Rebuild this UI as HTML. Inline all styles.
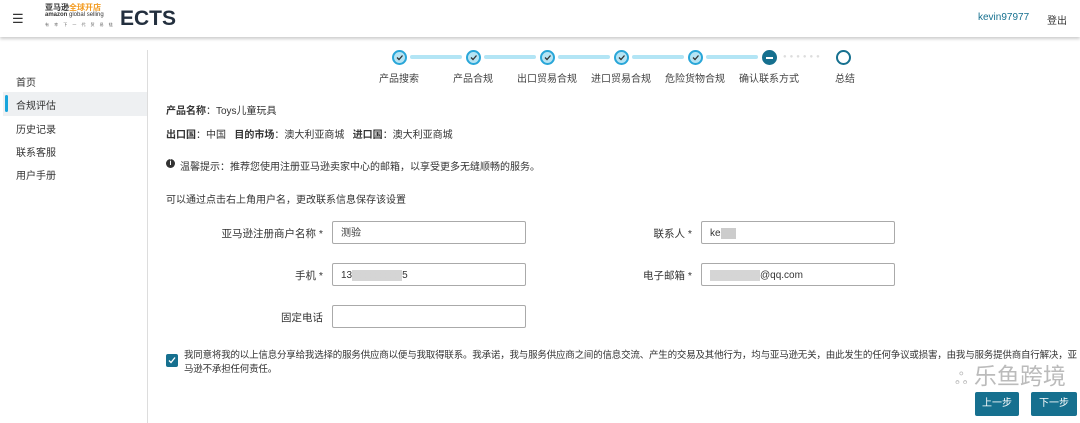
<!DOCTYPE html>
<html><head><meta charset="utf-8"><style>
*{margin:0;padding:0;box-sizing:border-box}
body{width:1080px;height:423px;overflow:hidden;background:#fff;font-family:"Liberation Sans","Noto Sans CJK SC",sans-serif;color:#333;font-size:10px;position:relative}
.a{position:absolute;white-space:nowrap}
.hdr{position:absolute;left:0;top:0;width:1080px;height:37px;background:#fff;box-shadow:0 2px 3px rgba(0,0,0,.2)}
.side div{position:absolute;left:16px;font-size:10px;color:#333}
.circ{position:absolute;width:15px;height:15px;border-radius:50%;border:2px solid #29a6d8;background:#b5e4f4;top:50px}
.circ svg{position:absolute;left:1px;top:1px}
.bar{position:absolute;top:55px;height:4px;background:#b3e5f5;border-radius:2px}
.lbl{position:absolute;top:70px;font-size:10px;color:#444;white-space:nowrap;transform:translateX(-50%)}
.inp{position:absolute;height:23px;border:1px solid #aaa;border-radius:2px;background:#fff;font-size:10px;padding:1px 8px 0;line-height:21px;color:#333}
.fl{position:absolute;font-size:10.5px;color:#333;text-align:right;white-space:nowrap}
.btn{position:absolute;top:392px;height:24px;background:#16708f;color:#fff;font-size:10px;text-align:center;line-height:24px;border-radius:2px}
b{font-weight:bold}
</style></head><body>
<div class="hdr">
<div class="a" style="left:12px;top:11px;font-size:13px;color:#333">☰</div>
<div class="a" style="left:45px;top:3px;font-size:8px;line-height:9px;font-weight:bold;color:#333">亚马逊<span style="color:#f39a1e">全球开店</span></div>
<div class="a" style="left:45px;top:12px;font-size:6px;line-height:7px;color:#333"><b>amazon</b> global selling</div>
<div class="a" style="left:45px;top:22px;font-size:4px;line-height:5px;color:#666;letter-spacing:2px">有 幸 下 一 代 贸 易 链</div>
<div class="a" style="left:120px;top:7px;font-size:21px;font-weight:bold;color:#232f3e">ECTS</div>
<div class="a" style="left:978px;top:12px;font-size:10px;color:#16708f">kevin97977</div>
<div class="a" style="left:1047px;top:12px;font-size:10px;color:#333">登出</div>
</div>
<div class="a" style="left:147px;top:50px;width:1px;height:373px;background:#ddd"></div>
<div class="a" style="left:3px;top:92px;width:144px;height:24px;background:#eef0f2"></div>
<div class="a" style="left:5px;top:95px;width:3px;height:17px;background:#18a5dc;border-radius:2px"></div>
<div class="side"><div style="top:74px">首页</div><div style="top:97px">合规评估</div><div style="top:121px">历史记录</div><div style="top:144px">联系客服</div><div style="top:167px">用户手册</div></div>

<div class="bar" style="left:410px;width:52px"></div>
<div class="bar" style="left:484px;width:52px"></div>
<div class="bar" style="left:558px;width:52px"></div>
<div class="bar" style="left:632px;width:52px"></div>
<div class="bar" style="left:706px;width:52px"></div>
<div class="circ" style="left:392px"><svg width="9" height="9"><path d="M2 4.5l2 2 3.5-4" stroke="#333" stroke-width="1.3" fill="none"/></svg></div>
<div class="circ" style="left:466px"><svg width="9" height="9"><path d="M2 4.5l2 2 3.5-4" stroke="#333" stroke-width="1.3" fill="none"/></svg></div>
<div class="circ" style="left:540px"><svg width="9" height="9"><path d="M2 4.5l2 2 3.5-4" stroke="#333" stroke-width="1.3" fill="none"/></svg></div>
<div class="circ" style="left:614px"><svg width="9" height="9"><path d="M2 4.5l2 2 3.5-4" stroke="#333" stroke-width="1.3" fill="none"/></svg></div>
<div class="circ" style="left:688px"><svg width="9" height="9"><path d="M2 4.5l2 2 3.5-4" stroke="#333" stroke-width="1.3" fill="none"/></svg></div>
<div class="circ" style="left:762px;background:#16708f;border-color:#16708f"><div style="position:absolute;left:2px;top:4.5px;width:7px;height:2px;background:#fff"></div></div>
<div class="a" style="left:783px;top:54px;font-size:6px;color:#ddd;letter-spacing:3px">●●●●●●</div>
<div class="circ" style="left:836px;background:#fff;border-color:#16708f"></div>
<div class="lbl" style="left:399px">产品搜索</div>
<div class="lbl" style="left:473px">产品合规</div>
<div class="lbl" style="left:547px">出口贸易合规</div>
<div class="lbl" style="left:621px">进口贸易合规</div>
<div class="lbl" style="left:695px">危险货物合规</div>
<div class="lbl" style="left:769px">确认联系方式</div>
<div class="lbl" style="left:845px">总结</div>

<div class="a" style="left:166px;top:102px"><b>产品名称</b>：Toys儿童玩具</div>
<div class="a" style="left:166px;top:126px"><b>出口国</b>：中国&nbsp;&nbsp;&nbsp;<b>目的市场</b>：澳大利亚商城&nbsp;&nbsp;&nbsp;<b>进口国</b>：澳大利亚商城</div>
<div class="a" style="left:166px;top:159px;width:9px;height:9px;border-radius:50%;background:#333;color:#fff;font-size:7px;text-align:center;line-height:9px;font-weight:bold">i</div>
<div class="a" style="left:180px;top:158px">温馨提示：推荐您使用注册亚马逊卖家中心的邮箱，以享受更多无缝顺畅的服务。</div>
<div class="a" style="left:166px;top:191px">可以通过点击右上角用户名，更改联系信息保存该设置</div>

<div class="fl" style="right:757px;top:226px">亚马逊注册商户名称 *</div>
<div class="inp" style="left:332px;top:221px;width:194px">测验</div>
<div class="fl" style="right:388px;top:226px">联系人 *</div>
<div class="inp" style="left:701px;top:221px;width:194px">ke<span style="background:#ccc;color:#ccc">xxx</span></div>
<div class="fl" style="right:757px;top:268px">手机 *</div>
<div class="inp" style="left:332px;top:263px;width:194px">13<span style="background:#d5d5d5;color:#d5d5d5">xxxxxxxxxx</span>5</div>
<div class="fl" style="right:388px;top:268px">电子邮箱 *</div>
<div class="inp" style="left:701px;top:263px;width:194px"><span style="background:#d5d5d5;color:#d5d5d5">xxxxxxxxxx</span>@qq.com</div>
<div class="fl" style="right:757px;top:310px">固定电话</div>
<div class="inp" style="left:332px;top:305px;width:194px"></div>

<div class="a" style="left:166px;top:354px;width:12px;height:13px;background:#16708f;border-radius:2px"><svg width="12" height="13"><path d="M3 6.5l2 2 4-5" stroke="#fff" stroke-width="1.3" fill="none"/></svg></div>
<div class="a" style="left:184px;top:349px;font-size:9.5px;line-height:14px;white-space:normal;width:896px;letter-spacing:-0.2px">我同意将我的以上信息分享给我选择的服务供应商以便与我取得联系。我承诺，我与服务供应商之间的信息交流、产生的交易及其他行为，均与亚马逊无关，由此发生的任何争议或损害，由我与服务提供商自行解决，亚马逊不承担任何责任。</div>
<div class="a" style="left:955px;top:357px;font-size:23px;color:#bbb"><span style="font-size:16px">ஃ</span> 乐鱼跨境</div>
<div class="btn" style="left:975px;width:44px">上一步</div>
<div class="btn" style="left:1031px;width:46px">下一步</div>
</body></html>
